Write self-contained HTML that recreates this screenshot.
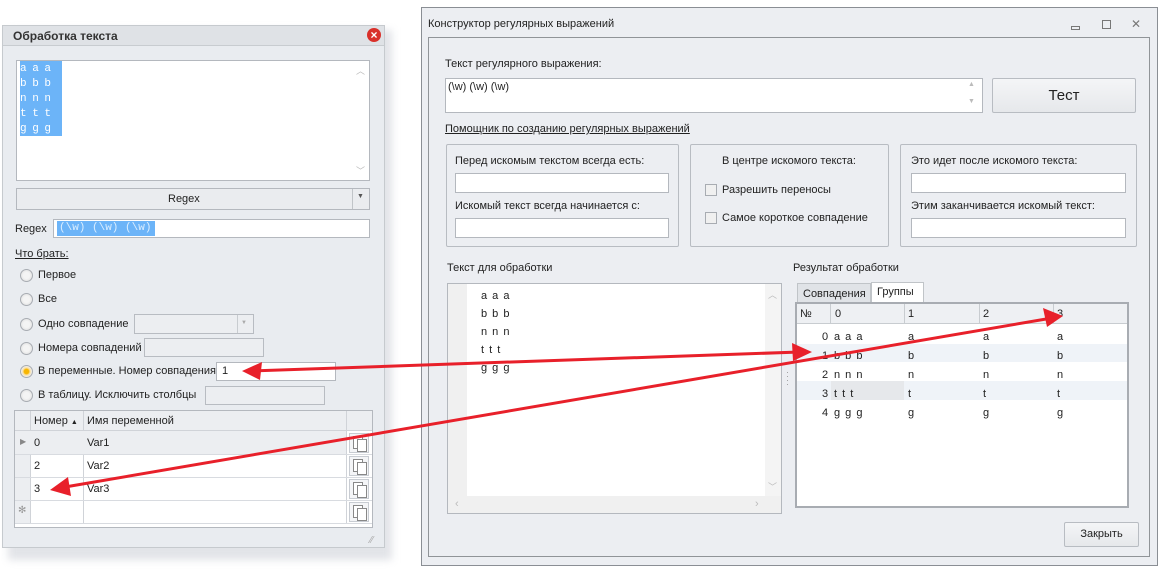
<!DOCTYPE html>
<html><head><meta charset="utf-8"><style>
*{box-sizing:border-box;margin:0;padding:0}
body{width:1172px;height:579px;background:#fff;position:relative;overflow:hidden;font-family:"Liberation Sans",sans-serif;font-size:11px;color:#222}
.a{position:absolute}
.box{position:absolute;background:#fff;border:1px solid #b4b8be}
.t{position:absolute;white-space:nowrap}
.radio{position:absolute;width:13px;height:13px;border-radius:50%;border:1px solid #a8acb2;background:radial-gradient(circle,#f4f4f4 40%,#d8d8d8 100%)}
.dis{position:absolute;background:#eceef1;border:1px solid #b8bcc2}
.cb{position:absolute;width:12px;height:12px;border:1px solid #a8acb2;background:#f0f0f0}
.copy{position:absolute;width:20px;height:20px;border:1px solid #c8ccd2;background:#f4f5f7}
.copy:before,.copy:after{content:"";position:absolute;width:8px;height:11px;border:1px solid #888;background:#fff}
.copy:before{left:3px;top:2px}.copy:after{left:7px;top:5px}
</style></head><body>
<!-- left window -->
<div class="a" style="left:8px;top:30px;width:384px;height:530px;background:#e2e4e8;filter:blur(4px)"></div>
<div class="a" style="left:2px;top:25px;width:383px;height:523px;background:#e9ecf0;border:1px solid #c6cace"></div>
<div class="a" style="left:3px;top:26px;width:381px;height:20px;background:#dfe2e6;border-bottom:1px solid #c8ccd0"></div>
<div class="t" style="left:13px;top:29px;font-weight:bold;font-size:12px;color:#333">Обработка текста</div>
<div class="a" style="left:367px;top:28px;width:14px;height:14px;border-radius:50%;background:#d9302a;color:#fff;font-size:12px;line-height:14px;text-align:center;font-weight:bold">×</div>
<div class="box" style="left:16px;top:60px;width:354px;height:121px"></div>
<div class="a" style="left:20px;top:61px;width:42px;height:75px;background:#6cb4f8"></div>
<div class="t" style="left:20px;top:62px;font-family:'Liberation Mono',monospace;font-size:11px;line-height:15px;color:#fff;letter-spacing:-.5px">a a a<br>b b b<br>n n n<br>t t t<br>g g g</div>
<div class="t" style="left:356px;top:64px;color:#bbb;font-size:9px">︿</div>
<div class="t" style="left:356px;top:164px;color:#bbb;font-size:9px">﹀</div>
<div class="a" style="left:16px;top:188px;width:354px;height:22px;background:#eaecef;border:1px solid #b4b8be"></div>
<div class="a" style="left:352px;top:189px;width:1px;height:20px;background:#c0c4c8"></div>
<div class="t" style="left:168px;top:193px;font-size:11px">Regex</div>
<div class="t" style="left:357px;top:193px;font-size:7px;color:#555">▼</div>
<div class="t" style="left:15px;top:223px">Regex</div>
<div class="box" style="left:53px;top:219px;width:317px;height:19px"></div>
<div class="a" style="left:57px;top:221px;width:98px;height:15px;background:#6cb4f8"></div>
<div class="t" style="left:59px;top:222px;font-family:'Liberation Mono',monospace;font-size:11px;color:#dbeeff">(\w) (\w) (\w)</div>
<div class="t" style="left:15px;top:248px;text-decoration:underline">Что брать:</div>
<div class="radio" style="left:20px;top:269px"></div><div class="t" style="left:38px;top:269px">Первое</div>
<div class="radio" style="left:20px;top:293px"></div><div class="t" style="left:38px;top:293px">Все</div>
<div class="radio" style="left:20px;top:318px"></div><div class="t" style="left:38px;top:318px">Одно совпадение</div>
<div class="dis" style="left:134px;top:314px;width:120px;height:20px"></div><div class="a" style="left:237px;top:315px;width:1px;height:18px;background:#c8ccd0"></div><div class="t" style="left:241px;top:320px;font-size:6px;color:#aaa">▼</div>
<div class="radio" style="left:20px;top:342px"></div><div class="t" style="left:38px;top:342px">Номера совпадений</div>
<div class="dis" style="left:144px;top:338px;width:120px;height:19px"></div>
<div class="radio" style="left:20px;top:365px;background:radial-gradient(circle,#f7b500 30%,#fbe0a0 45%,#eee 70%)"></div><div class="t" style="left:38px;top:365px">В переменные. Номер совпадения</div>
<div class="box" style="left:216px;top:362px;width:120px;height:19px"></div><div class="t" style="left:222px;top:365px">1</div>
<div class="radio" style="left:20px;top:389px"></div><div class="t" style="left:38px;top:389px">В таблицу. Исключить столбцы</div>
<div class="dis" style="left:205px;top:386px;width:120px;height:19px"></div>
<!-- grid -->
<div class="box" style="left:14px;top:410px;width:359px;height:118px;background:#fff"></div>
<div class="a" style="left:15px;top:411px;width:357px;height:20px;background:#eceef1;border-bottom:1px solid #d0d3d8"></div>
<div class="a" style="left:15px;top:431px;width:15px;height:92px;background:#eceef1"></div>
<div class="a" style="left:30px;top:411px;width:1px;height:112px;background:#d0d3d8"></div>
<div class="a" style="left:83px;top:411px;width:1px;height:112px;background:#d0d3d8"></div>
<div class="a" style="left:346px;top:411px;width:1px;height:112px;background:#d0d3d8"></div>
<div class="a" style="left:30px;top:431px;width:316px;height:23px;background:#eceef1"></div>
<div class="a" style="left:15px;top:454px;width:357px;height:1px;background:#d8dbe0"></div>
<div class="a" style="left:15px;top:477px;width:357px;height:1px;background:#d8dbe0"></div>
<div class="a" style="left:15px;top:500px;width:357px;height:1px;background:#d8dbe0"></div>
<div class="a" style="left:15px;top:523px;width:357px;height:1px;background:#d8dbe0"></div>
<div class="t" style="left:34px;top:415px">Номер <span style="font-size:7px">▲</span></div>
<div class="t" style="left:87px;top:415px">Имя переменной</div>
<div class="t" style="left:20px;top:437px;font-size:8px;color:#888">▶</div>
<div class="t" style="left:34px;top:437px">0</div><div class="t" style="left:87px;top:437px">Var1</div>
<div class="t" style="left:34px;top:460px">2</div><div class="t" style="left:87px;top:460px">Var2</div>
<div class="t" style="left:34px;top:483px">3</div><div class="t" style="left:87px;top:483px">Var3</div>
<div class="t" style="left:18px;top:505px;color:#999;font-size:10px">✻</div>
<div class="copy" style="left:349px;top:433px"></div>
<div class="copy" style="left:349px;top:456px"></div>
<div class="copy" style="left:349px;top:479px"></div>
<div class="copy" style="left:349px;top:502px"></div>
<div class="t" style="left:370px;top:535px;color:#aaa;font-size:10px">⁄⁄</div>

<!-- right window -->
<div class="a" style="left:421px;top:7px;width:737px;height:559px;background:#eceef2;border:1px solid #8a8e94"></div>
<div class="t" style="left:428px;top:18px;font-size:11px">Конструктор регулярных выражений</div>
<div class="a" style="left:1071px;top:26px;width:9px;height:4px;border:1px solid #777"></div>
<div class="a" style="left:1102px;top:20px;width:9px;height:9px;border:1px solid #777"></div>
<div class="t" style="left:1131px;top:17px;color:#777;font-size:12px">✕</div>
<div class="a" style="left:428px;top:37px;width:722px;height:520px;border:1px solid #909498"></div>
<div class="t" style="left:445px;top:58px">Текст регулярного выражения:</div>
<div class="box" style="left:445px;top:78px;width:538px;height:35px"></div>
<div class="t" style="left:448px;top:81px;font-size:11px">(\w) (\w) (\w)</div>
<div class="t" style="left:968px;top:81px;font-size:7px;color:#bbb">▲</div>
<div class="t" style="left:968px;top:98px;font-size:7px;color:#bbb">▼</div>
<div class="a" style="left:992px;top:78px;width:144px;height:35px;background:linear-gradient(#f4f5f7,#e6e8eb);border:1px solid #b8bcc2;border-radius:2px;text-align:center;line-height:33px;font-size:15px">Тест</div>
<div class="t" style="left:445px;top:123px;text-decoration:underline">Помощник по созданию регулярных выражений</div>
<div class="a" style="left:446px;top:144px;width:233px;height:103px;border:1px solid #b8bcc2;border-radius:2px"></div>
<div class="a" style="left:690px;top:144px;width:199px;height:103px;border:1px solid #b8bcc2;border-radius:2px"></div>
<div class="a" style="left:900px;top:144px;width:237px;height:103px;border:1px solid #b8bcc2;border-radius:2px"></div>
<div class="t" style="left:455px;top:155px">Перед искомым текстом всегда есть:</div>
<div class="box" style="left:455px;top:173px;width:214px;height:20px"></div>
<div class="t" style="left:455px;top:200px">Искомый текст всегда начинается с:</div>
<div class="box" style="left:455px;top:218px;width:214px;height:20px"></div>
<div class="t" style="left:722px;top:155px">В центре искомого текста:</div>
<div class="cb" style="left:705px;top:184px"></div><div class="t" style="left:722px;top:184px">Разрешить переносы</div>
<div class="cb" style="left:705px;top:212px"></div><div class="t" style="left:722px;top:212px">Самое короткое совпадение</div>
<div class="t" style="left:911px;top:155px">Это идет после искомого текста:</div>
<div class="box" style="left:911px;top:173px;width:215px;height:20px"></div>
<div class="t" style="left:911px;top:200px">Этим заканчивается искомый текст:</div>
<div class="box" style="left:911px;top:218px;width:215px;height:20px"></div>
<div class="t" style="left:447px;top:262px">Текст для обработки</div>
<div class="box" style="left:447px;top:283px;width:335px;height:231px"></div>
<div class="a" style="left:448px;top:284px;width:19px;height:212px;background:#f0f0f0"></div>
<div class="a" style="left:765px;top:284px;width:16px;height:212px;background:#f4f4f4"></div>
<div class="a" style="left:448px;top:496px;width:333px;height:17px;background:#f0f0f0"></div>
<div class="t" style="left:481px;top:287px;line-height:18px;letter-spacing:1px">a a a<br>b b b<br>n n n<br>t t t<br>g g g</div>
<div class="t" style="left:768px;top:288px;font-size:9px;color:#bbb">︿</div>
<div class="t" style="left:768px;top:480px;font-size:9px;color:#bbb">﹀</div>
<div class="t" style="left:455px;top:498px;color:#bbb">‹</div>
<div class="t" style="left:755px;top:498px;color:#bbb">›</div>
<div class="t" style="left:786px;top:370px;color:#999;font-size:9px;line-height:4px">·<br>·<br>·<br>·</div>
<div class="t" style="left:793px;top:262px">Результат обработки</div>
<div class="a" style="left:797px;top:283px;width:74px;height:20px;background:#e0e3e7;border:1px solid #c0c4c8"></div>
<div class="t" style="left:803px;top:288px">Совпадения</div>
<div class="a" style="left:871px;top:282px;width:53px;height:21px;background:#fff;border:1px solid #c0c4c8;border-bottom:none"></div>
<div class="t" style="left:877px;top:286px">Группы</div>
<div class="a" style="left:795px;top:302px;width:334px;height:206px;background:#fff;border:2px solid #a8acb2"></div>
<div class="a" style="left:797px;top:304px;width:330px;height:20px;background:#eef0f3;border-bottom:1px solid #c8ccd0"></div>
<div class="a" style="left:830px;top:304px;width:1px;height:20px;background:#c8ccd0"></div>
<div class="a" style="left:904px;top:304px;width:1px;height:20px;background:#c8ccd0"></div>
<div class="a" style="left:979px;top:304px;width:1px;height:20px;background:#c8ccd0"></div>
<div class="a" style="left:1053px;top:304px;width:1px;height:20px;background:#c8ccd0"></div>
<div class="t" style="left:800px;top:308px">№</div><div class="t" style="left:835px;top:308px">0</div><div class="t" style="left:908px;top:308px">1</div><div class="t" style="left:983px;top:308px">2</div><div class="t" style="left:1057px;top:308px">3</div>
<div class="a" style="left:797px;top:344px;width:330px;height:18px;background:#eff3f8"></div>
<div class="a" style="left:797px;top:381px;width:330px;height:19px;background:#eff3f8"></div>
<div class="a" style="left:831px;top:381px;width:73px;height:19px;background:#e6e8eb"></div>
<div class="t" style="left:822px;top:328px;line-height:19px">0<br>1<br>2<br>3<br>4</div>
<div class="t" style="left:834px;top:328px;line-height:19px;letter-spacing:1px">a a a<br>b b b<br>n n n<br>t t t<br>g g g</div>
<div class="t" style="left:908px;top:328px;line-height:19px">a<br>b<br>n<br>t<br>g</div>
<div class="t" style="left:983px;top:328px;line-height:19px">a<br>b<br>n<br>t<br>g</div>
<div class="t" style="left:1057px;top:328px;line-height:19px">a<br>b<br>n<br>t<br>g</div>
<div class="a" style="left:1064px;top:522px;width:75px;height:25px;background:linear-gradient(#f4f5f7,#e6e8eb);border:1px solid #b8bcc2;border-radius:2px;text-align:center;line-height:23px">Закрыть</div>

<svg class="a" style="left:0;top:0" width="1172" height="579" viewBox="0 0 1172 579">
<g stroke="#e8202a" stroke-width="3" fill="#e8202a">
<line x1="250" y1="371" x2="800" y2="352"/>
<polygon points="242,371 262,362 260,380" stroke="none"/>
<polygon points="812,352 792,343 793,361" stroke="none"/>
<line x1="65" y1="487" x2="1052" y2="318"/>
<polygon points="50,490 68,477 71,496" stroke="none"/>
<polygon points="1063,316 1043,308 1047,327" stroke="none"/>
</g></svg>
</body></html>
